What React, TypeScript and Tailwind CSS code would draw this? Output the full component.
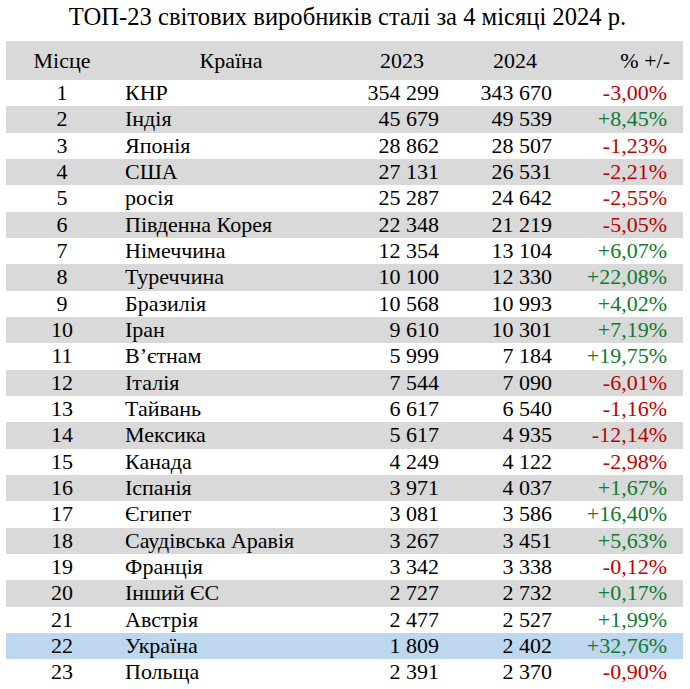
const rows: [string, string, string, string, string][] = [
  ['1', 'КНР', '354 299', '343 670', '-3,00%'],
  ['2', 'Індія', '45 679', '49 539', '+8,45%'],
  ['3', 'Японія', '28 862', '28 507', '-1,23%'],
  ['4', 'США', '27 131', '26 531', '-2,21%'],
  ['5', 'росія', '25 287', '24 642', '-2,55%'],
  ['6', 'Південна Корея', '22 348', '21 219', '-5,05%'],
  ['7', 'Німеччина', '12 354', '13 104', '+6,07%'],
  ['8', 'Туреччина', '10 100', '12 330', '+22,08%'],
  ['9', 'Бразилія', '10 568', '10 993', '+4,02%'],
  ['10', 'Іран', '9 610', '10 301', '+7,19%'],
  ['11', 'В’єтнам', '5 999', '7 184', '+19,75%'],
  ['12', 'Італія', '7 544', '7 090', '-6,01%'],
  ['13', 'Тайвань', '6 617', '6 540', '-1,16%'],
  ['14', 'Мексика', '5 617', '4 935', '-12,14%'],
  ['15', 'Канада', '4 249', '4 122', '-2,98%'],
  ['16', 'Іспанія', '3 971', '4 037', '+1,67%'],
  ['17', 'Єгипет', '3 081', '3 586', '+16,40%'],
  ['18', 'Саудівська Аравія', '3 267', '3 451', '+5,63%'],
  ['19', 'Франція', '3 342', '3 338', '-0,12%'],
  ['20', 'Інший ЄС', '2 727', '2 732', '+0,17%'],
  ['21', 'Австрія', '2 477', '2 527', '+1,99%'],
  ['22', 'Україна', '1 809', '2 402', '+32,76%'],
  ['23', 'Польща', '2 391', '2 370', '-0,90%'],
];

export default function App() {
  return (
    <div className="w-[690px] h-[689px] bg-white text-black overflow-hidden font-['Liberation_Serif','Times_New_Roman',serif]">
      <div className="h-[41px] pl-[5px] text-center text-[24.6px] leading-[34px]">
        ТОП-23 світових виробників сталі за 4 місяці 2024 р.
      </div>

      <div className="ml-[6px] w-[677px] text-[22px]">
        {/* header */}
        <div className="flex h-[39px] leading-[39px] bg-[#d9d9d9]">
          <div className="w-[112px] text-center">Місце</div>
          <div className="w-[226px] text-center">Країна</div>
          <div className="w-[108px] text-right pr-[28px]">2023</div>
          <div className="w-[108px] text-right pr-[23px]">2024</div>
          <div className="w-[123px] text-right pr-[13px]">% +/-</div>
        </div>

        {rows.map(([place, country, y23, y24, diff]) => {
          const n = Number(place);
          const bg = n === 22 ? 'bg-[#bdd7ee]' : n % 2 === 0 ? 'bg-[#d9d9d9]' : 'bg-white';
          return (
            <div key={place} className={`flex h-[26.33px] leading-[26.33px] ${bg}`}>
              <div className="w-[112px] text-center">{place}</div>
              <div className="w-[226px] pl-[7px] whitespace-nowrap">{country}</div>
              <div className="w-[108px] text-right pr-[13px]">{y23}</div>
              <div className="w-[108px] text-right pr-[8px]">{y24}</div>
              <div className={`w-[123px] text-right pr-[16px] ${diff.startsWith('-') ? 'text-[#c00000]' : 'text-[#107a30]'}`}>
                {diff}
              </div>
            </div>
          );
        })}
      </div>
    </div>
  );
}
